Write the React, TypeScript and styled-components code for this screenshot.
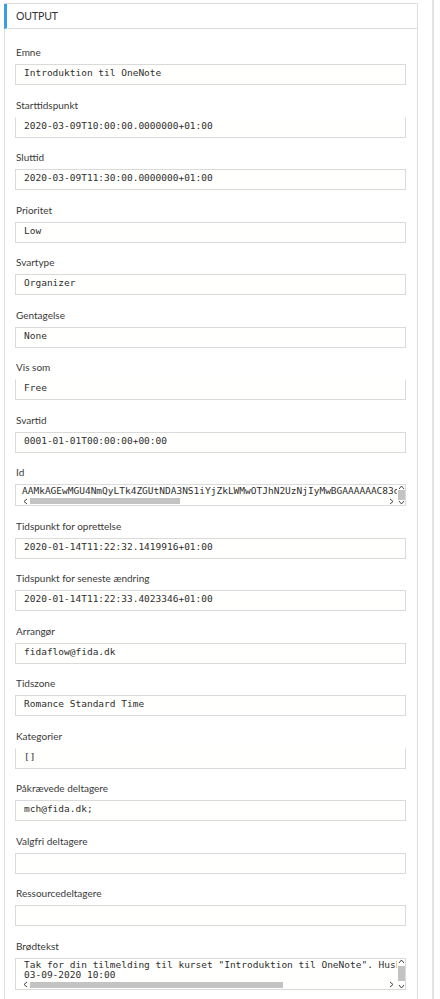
import React from 'react'
import styled, { createGlobalStyle } from 'styled-components'

const GlobalStyle = createGlobalStyle`
  html, body {
    margin: 0;
    padding: 0;
    background: #ffffff;
  }
  body {
    font-family: Lato, "Open Sans", sans-serif;
    color: #333333;
  }
`

const Page = styled.div`
  display: flex;
  align-items: stretch;
  min-height: 999px;
`

const Card = styled.section`
  box-sizing: border-box;
  width: 414px;
  margin: 3px 0 0 4px;
  border: 1px solid #dedede;
  border-bottom: none;
  background: #ffffff;
`

const Header = styled.div`
  box-sizing: border-box;
  height: 25px;
  margin-left: -1px;
  padding-left: 9px;
  display: flex;
  align-items: center;
  border-left: 3px solid #3d9de2;
  border-bottom: 1px solid #dedede;
  font-size: 10.5px;
  color: #333333;
  letter-spacing: -0.1px;
`

const Body = styled.div`
  padding: 15px 11px 24px 10px;
`

const Field = styled.div`
  margin-bottom: 11.5px;
`

const Label = styled.div`
  height: 16px;
  line-height: 16px;
  margin: 0 0 4px 1px;
  font-size: 10px;
  color: #3a3a3a;
`

const Box = styled.div<{ $clipped?: boolean }>`
  box-sizing: border-box;
  height: 21px;
  padding: 0 8px;
  border: 1px solid #dadada;
  border-top-color: ${p => (p.$clipped ? 'transparent' : '#dadada')};
  background: #fffffd;
  font-family: "DejaVu Sans Mono", "Liberation Mono", monospace;
  font-size: 9.5px;
  line-height: 16px;
  color: #2e2e2e;
  white-space: nowrap;
  overflow: hidden;
`

const ScrollBox = styled.div<{ $height: number }>`
  box-sizing: border-box;
  height: ${p => p.$height}px;
  border: 1px solid #dadada;
  background: #fffffd;
  display: grid;
  grid-template-columns: 1fr 8px;
  grid-template-rows: 1fr 8px;
`

const ScrollText = styled.div<{ $pad: number }>`
  padding-left: ${p => p.$pad}px;
  font-family: "DejaVu Sans Mono", "Liberation Mono", monospace;
  font-size: 9.5px;
  line-height: 10px;
  padding-top: 1px;
  color: #2e2e2e;
  white-space: pre;
  overflow: hidden;
`

const HBar = styled.div`
  display: flex;
  align-items: center;
  padding: 0 3px 0 7px;
`

const HTrack = styled.div`
  flex: 1;
  height: 6px;
  margin: 0 2px;
`

const HThumb = styled.div`
  height: 6px;
  background: #c3c3c3;
`

const VBar = styled.div`
  grid-row: 1 / 3;
  grid-column: 2;
  display: flex;
  flex-direction: column;
  align-items: center;
`

const VThumb = styled.div<{ $full?: boolean }>`
  flex: 1;
  width: 7px;
  margin: ${p => (p.$full ? '0' : '2px 0 3px')};
  background: #c3c3c3;
`

const Divider = styled.div`
  width: 2px;
  margin-left: 14px;
  background: #e4e4e4;
`

const Chevron = ({ dir }: { dir: 'left' | 'right' | 'up' | 'down' }) => {
  const paths: Record<string, string> = {
    left: 'M4 1 L1 3.5 L4 6',
    right: 'M1 1 L4 3.5 L1 6',
    up: 'M1 4 L3.5 1 L6 4',
    down: 'M1 1 L3.5 4 L6 1',
  }
  const horizontal = dir === 'left' || dir === 'right'
  return (
    <svg
      width={horizontal ? 5 : 7}
      height={horizontal ? 7 : 5}
      viewBox={horizontal ? '0 0 5 7' : '0 0 7 5'}
      style={{ flexShrink: 0 }}
    >
      <path d={paths[dir]} fill="none" stroke="#444" strokeWidth="1" />
    </svg>
  )
}

type Plain = { label: string; value: string; clipped?: boolean }

const plainFields: Plain[] = [
  { label: 'Emne', value: 'Introduktion til OneNote' },
  { label: 'Starttidspunkt', value: '2020-03-09T10:00:00.0000000+01:00', clipped: true },
  { label: 'Sluttid', value: '2020-03-09T11:30:00.0000000+01:00' },
  { label: 'Prioritet', value: 'Low' },
  { label: 'Svartype', value: 'Organizer' },
  { label: 'Gentagelse', value: 'None' },
  { label: 'Vis som', value: 'Free', clipped: true },
  { label: 'Svartid', value: '0001-01-01T00:00:00+00:00' },
]

const moreFields: Plain[] = [
  { label: 'Tidspunkt for oprettelse', value: '2020-01-14T11:22:32.1419916+01:00' },
  { label: 'Tidspunkt for seneste ændring', value: '2020-01-14T11:22:33.4023346+01:00' },
  { label: 'Arrangør', value: 'fidaflow@fida.dk' },
  { label: 'Tidszone', value: 'Romance Standard Time' },
  { label: 'Kategorier', value: '[]', clipped: true },
  { label: 'Påkrævede deltagere', value: 'mch@fida.dk;' },
  { label: 'Valgfri deltagere', value: '' },
  { label: 'Ressourcedeltagere', value: '' },
]

const PlainField = ({ label, value, clipped }: Plain) => (
  <Field>
    <Label>{label}</Label>
    <Box $clipped={clipped}>{value}</Box>
  </Field>
)

const ScrollField = ({
  label,
  text,
  height,
  pad,
  thumb,
  fullV,
}: {
  label: string
  text: string
  height: number
  pad: number
  thumb: number
  fullV?: boolean
}) => (
  <Field>
    <Label>{label}</Label>
    <ScrollBox $height={height}>
      <ScrollText $pad={pad}>{text}</ScrollText>
      <VBar>
        <Chevron dir="up" />
        <VThumb $full={fullV} />
        <Chevron dir="down" />
      </VBar>
      <HBar>
        <Chevron dir="left" />
        <HTrack>
          <HThumb style={{ width: thumb }} />
        </HTrack>
        <Chevron dir="right" />
      </HBar>
    </ScrollBox>
  </Field>
)

const App = () => {
  return (
    <>
      <GlobalStyle />
      <Page>
        <Card>
          <Header>OUTPUT</Header>
          <Body>
            {plainFields.map(f => (
              <PlainField key={f.label} {...f} />
            ))}
            <ScrollField
              label="Id"
              text="AAMkAGEwMGU4NmQyLTk4ZGUtNDA3NS1iYjZkLWMwOTJhN2UzNjIyMwBGAAAAAAC83dMxAAAAAABGAAAA"
              height={22}
              pad={6}
              thumb={150}
              fullV
            />
            {moreFields.map(f => (
              <PlainField key={f.label} {...f} />
            ))}
            <ScrollField
              label="Brødtekst"
              text={'Tak for din tilmelding til kurset "Introduktion til OneNote". Husk at kurset starter\n03-09-2020 10:00'}
              height={32}
              pad={8}
              thumb={253}
            />
          </Body>
        </Card>
        <Divider />
      </Page>
    </>
  )
}

export default App
